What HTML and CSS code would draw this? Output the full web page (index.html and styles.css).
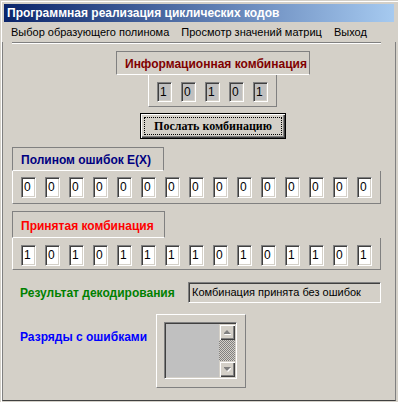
FILE: index.html
```html
<!DOCTYPE html>
<html lang="ru">
<head>
    <meta charset="UTF-8">
    <title>Программная реализация циклических кодов</title>
    <link rel="stylesheet" href="styles.css">
</head>
<body>
    <div class="window">
        <div class="titlebar">Программная реализация циклических кодов</div>

        <div class="menubar">
            <span class="menu-item">Выбор образующего полинома</span>
            <span class="menu-item">Просмотр значений матриц</span>
            <span class="menu-item">Выход</span>
        </div>

        <div class="client">
            <div class="separator"></div>

            <!-- информационная комбинация -->
            <div class="caption caption-info">Информационная комбинация</div>
            <div class="digits digits-info">
                <span class="bit bit-readonly">1</span>
                <span class="bit bit-readonly">0</span>
                <span class="bit bit-readonly">1</span>
                <span class="bit bit-readonly">0</span>
                <span class="bit bit-readonly">1</span>
            </div>

            <button class="send-btn"><span class="focus">Послать комбинацию</span></button>

            <!-- полином ошибок -->
            <div class="caption caption-error">Полином ошибок E(X)</div>
            <div class="digits digits-wide digits-error">
                <span class="bit">0</span>
                <span class="bit">0</span>
                <span class="bit">0</span>
                <span class="bit">0</span>
                <span class="bit">0</span>
                <span class="bit">0</span>
                <span class="bit">0</span>
                <span class="bit">0</span>
                <span class="bit">0</span>
                <span class="bit">0</span>
                <span class="bit">0</span>
                <span class="bit">0</span>
                <span class="bit">0</span>
                <span class="bit">0</span>
                <span class="bit">0</span>
            </div>

            <!-- принятая комбинация -->
            <div class="caption caption-received">Принятая комбинация</div>
            <div class="digits digits-wide digits-received">
                <span class="bit">1</span>
                <span class="bit">0</span>
                <span class="bit">1</span>
                <span class="bit">0</span>
                <span class="bit">1</span>
                <span class="bit">1</span>
                <span class="bit">1</span>
                <span class="bit">1</span>
                <span class="bit">0</span>
                <span class="bit">1</span>
                <span class="bit">0</span>
                <span class="bit">1</span>
                <span class="bit">1</span>
                <span class="bit">0</span>
                <span class="bit">1</span>
            </div>

            <div class="result-row">
                <span class="label label-result">Результат декодирования</span>
                <div class="result-box">Комбинация принята без ошибок</div>
            </div>

            <div class="errors-row">
                <span class="label label-errors">Разряды с ошибками</span>
                <div class="list-panel">
                    <div class="listbox">
                        <div class="list-area"></div>
                        <div class="scrollbar">
                            <div class="sb-btn">
                                <svg width="7" height="5" viewBox="0 0 7 5">
                                    <polygon points="4,1 8,5 0,5" fill="#fff"/>
                                    <polygon points="3,0 7,4 -1,4" fill="#808080"/>
                                </svg>
                            </div>
                            <div class="sb-track"></div>
                            <div class="sb-btn">
                                <svg width="7" height="5" viewBox="0 0 7 5">
                                    <polygon points="0,1 8,1 4,5" fill="#fff"/>
                                    <polygon points="-1,0 7,0 3,4" fill="#808080"/>
                                </svg>
                            </div>
                        </div>
                    </div>
                </div>
            </div>
        </div>
    </div>
</body>
</html>
```

FILE: styles.css
```css
body {
    margin: 0;
    background: #d4d0c8;
    font-family: "Liberation Sans", Arial, sans-serif;
    font-size: 12px;
    color: #000;
}

.window {
    width: 398px;
    height: 402px;
    box-sizing: border-box;
    padding: 4px 2px 0 4px;
    background: #d4d0c8;
    box-shadow: inset 1px 1px 0 #d4d0c8, inset 2px 2px 0 #fff;
    overflow: hidden;
}

.titlebar {
    height: 18px;
    margin-right: 2px;
    padding-left: 3px;
    background: linear-gradient(to right, #0a246a, #a6caf0);
    color: #fff;
    font-weight: bold;
    font-size: 12px;
    line-height: 18px;
    white-space: nowrap;
}

.menubar {
    display: flex;
    height: 19px;
    margin-right: 2px;
    font-size: 11px;
    line-height: 21px;
    white-space: nowrap;
}

.menu-item {
    padding: 0 6px;
}
.menu-item:first-child {
    padding-left: 7px;
}

.client {
    height: 359px;
    box-sizing: border-box;
    margin-left: -2px;
    border-left: 1px solid #808080;
    border-right: 1px solid #808080;
    border-bottom: 1px solid #404040;
}

.separator {
    width: 369px;
    margin: 1px 0 0 9px;
    border-top: 1px solid #808080;
    border-bottom: 1px solid #fff;
}

/* подписи групп */
.caption {
    box-sizing: border-box;
    height: 24px;
    border: 1px solid #808080;
    border-bottom-color: #fff;
    font-weight: bold;
    white-space: nowrap;
    line-height: 24px;
}
.caption-info {
    width: 194px;
    margin: 7px 0 0 113px;
    padding-left: 8px;
    color: #800000;
}
.caption-error {
    width: 152px;
    margin: 8px 0 0 9px;
    padding-left: 8px;
    color: #000080;
}
.caption-received {
    width: 153px;
    height: 27px;
    line-height: 28px;
    margin: 7px 0 0 9px;
    padding-left: 8px;
    color: #ff0000;
}

/* ряды разрядов */
.digits {
    display: flex;
    gap: 9px;
    box-sizing: border-box;
    border-left: 1px solid #fff;
    border-right: 1px solid #808080;
    border-bottom: 1px solid #808080;
    padding: 7px 8px 4px 8px;
}
.digits-info {
    width: 129px;
    margin-left: 145px;
}
.digits-wide {
    width: 369px;
    margin-left: 9px;
}
.digits-error {
    padding: 6px 8px 5px 8px;
}
.digits-received {
    padding: 7px 8px 3px 8px;
}

.bit {
    box-sizing: border-box;
    width: 15px;
    height: 21px;
    padding-left: 2px;
    background: #fff;
    border: 1px solid;
    border-color: #808080 #fff #fff #808080;
    box-shadow: inset 1px 1px 0 #404040, inset -1px -1px 0 #d4d0c8;
    line-height: 19px;
    font-size: 12px;
}
.digits-info .bit {
    height: 20px;
    line-height: 18px;
}
.bit-readonly {
    background: #c0c0c0;
}

/* кнопка */
.send-btn {
    display: block;
    box-sizing: border-box;
    width: 146px;
    height: 26px;
    margin: 6px 0 0 137px;
    padding: 3px;
    background: #d4d0c8;
    border: 1px solid #000;
    box-shadow: inset 1px 1px 0 #fff, inset -1px -1px 0 #404040, inset -2px -2px 0 #808080;
    font-family: "Liberation Serif", "Times New Roman", serif;
    font-weight: bold;
    font-size: 12px;
    color: #000;
}
.send-btn .focus {
    display: block;
    height: 100%;
    box-sizing: border-box;
    border: 1px dotted #000;
    line-height: 16px;
}

/* результат */
.result-row {
    display: grid;
    grid-template-columns: 185px 193px;
    align-items: center;
    margin-top: 12px;
}
.label {
    padding-left: 17px;
    font-weight: bold;
    white-space: nowrap;
}
.label-result {
    color: #008000;
}
.label-errors {
    color: #0000ff;
}

.result-box {
    box-sizing: border-box;
    height: 21px;
    padding-left: 3px;
    border: 1px solid;
    border-color: #808080 #fff #fff #808080;
    box-shadow: inset 1px 1px 0 #404040, inset -1px -1px 0 #d4d0c8;
    font-size: 11px;
    line-height: 19px;
    white-space: nowrap;
}

.errors-row {
    display: grid;
    grid-template-columns: 153px 90px;
    align-items: start;
    margin-top: 11px;
}
.label-errors {
    margin-top: 16px;
}

.list-panel {
    box-sizing: border-box;
    height: 74px;
    padding: 7px;
    border: 1px solid;
    border-color: #fff #808080 #808080 #fff;
}

.listbox {
    display: flex;
    box-sizing: border-box;
    width: 73px;
    height: 57px;
    background: #c0c0c0;
    border: 1px solid;
    border-color: #808080 #fff #fff #808080;
    box-shadow: inset 1px 1px 0 #404040, inset -1px -1px 0 #d4d0c8;
    padding: 1px;
}
.list-area {
    flex: 1;
}
.scrollbar {
    display: flex;
    flex-direction: column;
    width: 16px;
}
.sb-btn {
    display: flex;
    align-items: center;
    justify-content: center;
    height: 16px;
    box-sizing: border-box;
    background: #d4d0c8;
    box-shadow: inset 1px 1px 0 #d4d0c8, inset 2px 2px 0 #fff, inset -1px -1px 0 #404040, inset -2px -2px 0 #808080;
}
.sb-track {
    flex: 1;
    background: repeating-conic-gradient(#808080 0 25%, #d4d0c8 0 50%) 0 0 / 2px 2px;
}
```
